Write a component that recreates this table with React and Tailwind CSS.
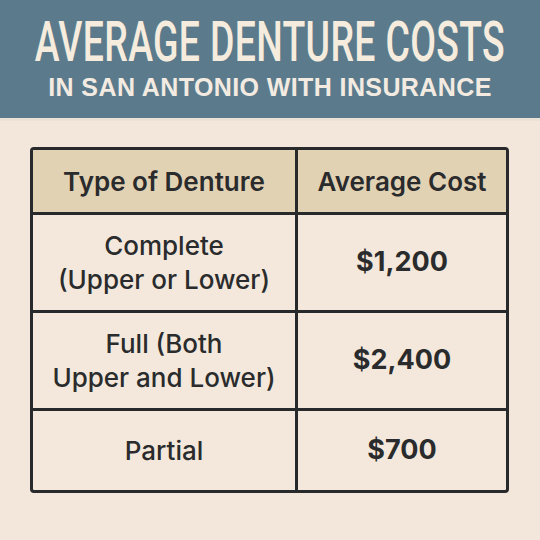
import React from 'react'

const rows = [
  { type: ['Complete', '(Upper or Lower)'], cost: '$1,200', h: 'h-[98px]' },
  { type: ['Full (Both', 'Upper and Lower)'], cost: '$2,400', h: 'h-[98px]' },
  { type: ['Partial'], cost: '$700', h: 'h-[79px]' },
]

function App() {
  return (
    <div className="w-[540px] h-[540px] overflow-hidden bg-[#f2e7da] font-['Inter','Liberation_Sans',sans-serif] text-[#2a2b2c]">
      {/* header band */}
      <div className="h-[121px] bg-[#5b7b8d] border-b-[3px] border-[#ece3d6] flex flex-col items-center">
        <div className="mt-[20px] h-[44px] flex items-center justify-center">
          <h1 className="font-['Roboto',sans-serif] font-medium text-[55px] leading-[44px] tracking-[0.5px] text-[#f6ecde] scale-x-[0.68] whitespace-nowrap">
            AVERAGE DENTURE COSTS
          </h1>
        </div>
        <p className="mt-[12px] font-['Liberation_Sans',sans-serif] font-bold text-[25px] leading-[22px] text-[#f3ebe1] tracking-[0.4px] whitespace-nowrap">
          IN SAN ANTONIO WITH INSURANCE
        </p>
      </div>

      {/* table */}
      <div className="mx-[30px] mt-[26px] w-[479px] border-[3px] border-[#27292a] rounded-[4px] overflow-hidden bg-[#f3e8db]">
        <div className="grid grid-cols-[265px_1fr] h-[65px] bg-[#e2d2b4] border-b-[3px] border-[#27292a]">
          <div className="flex items-center justify-center border-r-[3px] border-[#27292a] text-[26px] font-semibold">
            Type of Denture
          </div>
          <div className="flex items-center justify-center text-[26px] font-semibold">
            Average Cost
          </div>
        </div>
        {rows.map((r, i) => (
          <div
            key={i}
            className={`grid grid-cols-[265px_1fr] ${r.h} ${i < rows.length - 1 ? 'border-b-[3px] border-[#27292a]' : ''}`}
          >
            <div className="flex flex-col items-center justify-center border-r-[3px] border-[#27292a] text-[26px] font-medium leading-[34px]">
              {r.type.map((t) => (
                <span key={t}>{t}</span>
              ))}
            </div>
            <div className="flex items-center justify-center text-[27px] font-bold">
              {r.cost}
            </div>
          </div>
        ))}
      </div>
    </div>
  )
}

export default App
